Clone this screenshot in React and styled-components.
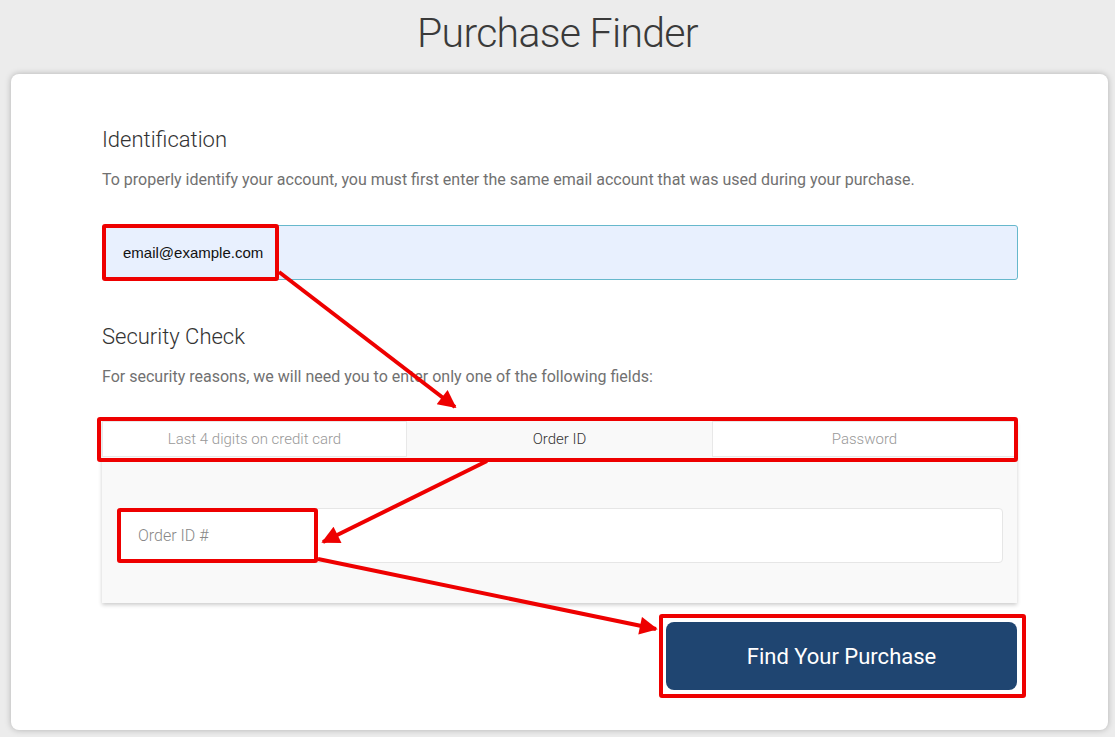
import React from 'react';
import styled, { createGlobalStyle } from 'styled-components';

const GlobalStyle = createGlobalStyle`
  html, body {
    margin: 0;
    padding: 0;
    background: #ececec;
  }
  body {
    font-family: Roboto, "Noto Sans", sans-serif;
  }
`;

const tabs = ['Last 4 digits on credit card', 'Order ID', 'Password'];

const Annotations = () => (
  <Overlay width="1115" height="737" viewBox="0 0 1115 737">
    <defs>
      <marker
        id="head"
        viewBox="0 0 10 10"
        refX="9"
        refY="5"
        markerWidth="5.5"
        markerHeight="4.5"
        orient="auto"
        markerUnits="strokeWidth"
      >
        <path d="M0 0 L10 5 L0 10 z" fill="#ee0000" />
      </marker>
    </defs>
    <g fill="none" stroke="#ee0000" strokeWidth="4">
      <rect x="104" y="226" width="173" height="53" rx="1" />
      <rect x="99" y="419" width="917" height="41" rx="1" />
      <rect x="119" y="510" width="197" height="51" rx="1" />
      <rect x="661" y="616" width="363" height="80" rx="1" />
      <line x1="279" y1="272" x2="455" y2="407" markerEnd="url(#head)" />
      <line x1="487" y1="461" x2="323" y2="542" markerEnd="url(#head)" />
      <line x1="318" y1="559" x2="656" y2="629" markerEnd="url(#head)" />
    </g>
  </Overlay>
);

const App = () => {
  return (
    <Page>
      <GlobalStyle />
      <Title>Purchase Finder</Title>
      <Card>
        <Section $gap={43}>
          <Heading>Identification</Heading>
          <Text>
            To properly identify your account, you must first enter the same email account that was
            used during your purchase.
          </Text>
          <EmailInput readOnly value="email@example.com" />
        </Section>
        <Section $gap={19}>
          <Heading>Security Check</Heading>
          <Text>For security reasons, we will need you to enter only one of the following fields:</Text>
          <TabBox>
            <TabRow>
              {tabs.map((t) => (
                <Tab key={t} $active={t === 'Order ID'}>
                  {t}
                </Tab>
              ))}
            </TabRow>
            <TabPanel>
              <FieldInput placeholder="Order ID #" />
            </TabPanel>
          </TabBox>
        </Section>
        <ButtonRow>
          <FindButton>Find Your Purchase</FindButton>
        </ButtonRow>
      </Card>
      <Annotations />
    </Page>
  );
};

const Page = styled.div`
  position: relative;
  width: 1115px;
  height: 737px;
  overflow: hidden;
  display: flex;
  flex-direction: column;
`;

const Overlay = styled.svg`
  position: absolute;
  left: 0;
  top: 0;
  pointer-events: none;
`;

const Title = styled.h1`
  margin: 0;
  height: 74px;
  display: flex;
  align-items: center;
  justify-content: center;
  padding-bottom: 8px;
  box-sizing: border-box;
  font-size: 41px;
  font-weight: 300;
  color: #3a3a3a;
  letter-spacing: -0.7px;
`;

const Card = styled.div`
  margin: 0 7px 0 11px;
  background: #ffffff;
  border-radius: 8px;
  box-shadow: 0 0 6px rgba(0, 0, 0, 0.25);
  padding: 52px 90px 40px 91px;
  display: flex;
  flex-direction: column;
  height: 656px;
  box-sizing: border-box;
`;

const Section = styled.div`
  display: flex;
  flex-direction: column;
  margin-bottom: ${({ $gap }) => $gap}px;
`;

const Heading = styled.h2`
  margin: 0;
  font-size: 22px;
  font-weight: 300;
  color: #333;
  line-height: 28px;
`;

const Text = styled.p`
  margin: 16px 0 0;
  font-size: 16px;
  font-weight: 400;
  color: #717171;
  line-height: 20px;
`;

const EmailInput = styled.input`
  margin-top: 35px;
  height: 55px;
  box-sizing: border-box;
  border: 1px solid #66b8cc;
  border-radius: 3px;
  background: #e8f0fe;
  padding: 0 20px;
  font-family: "Liberation Sans", Arial, sans-serif;
  font-size: 15px;
  color: #111;
  outline: none;
`;

const TabBox = styled.div`
  margin-top: 34px;
  margin-right: 1px;
  box-shadow: 0 2px 4px rgba(0, 0, 0, 0.2);
`;

const TabRow = styled.div`
  display: grid;
  grid-template-columns: repeat(3, 1fr);
  height: 36px;
  background: #f9f9f9;
`;

const Tab = styled.div`
  display: flex;
  align-items: center;
  justify-content: center;
  font-size: 15px;
  font-weight: 300;
  box-sizing: border-box;
  color: ${({ $active }) => ($active ? '#333' : '#999')};
  background: ${({ $active }) => ($active ? '#f9f9f9' : '#ffffff')};
  border: ${({ $active }) => ($active ? 'none' : '1px solid #e8e8e8')};
`;

const TabPanel = styled.div`
  background: #f9f9f9;
  padding: 51px 14px 40px 15px;
`;

const FieldInput = styled.input`
  width: 100%;
  height: 55px;
  box-sizing: border-box;
  border: 1px solid #e6e6e6;
  border-radius: 4px;
  background: #fff;
  padding: 0 20px;
  font-family: Roboto, sans-serif;
  font-size: 16px;
  font-weight: 300;
  color: #333;
  outline: none;
  &::placeholder {
    color: #888;
  }
`;

const ButtonRow = styled.div`
  display: flex;
  justify-content: flex-end;
  padding-right: 1px;
`;

const FindButton = styled.button`
  width: 351px;
  height: 68px;
  border: none;
  border-radius: 8px;
  background: #1f4571;
  color: #fff;
  font-family: Roboto, sans-serif;
  font-size: 22px;
  font-weight: 400;
  cursor: pointer;
`;

export default App;
